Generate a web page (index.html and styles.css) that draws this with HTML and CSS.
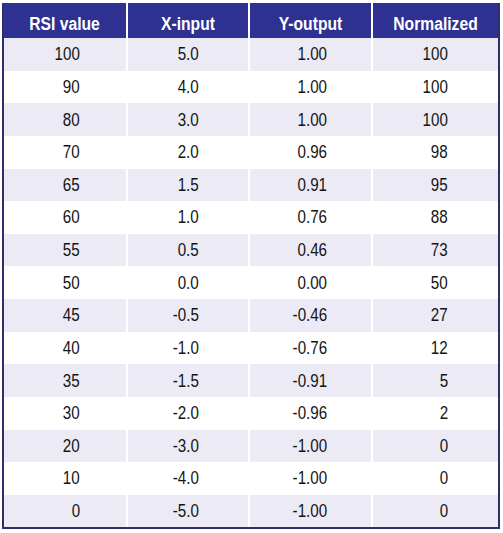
FILE: index.html
```html
<!DOCTYPE html>
<html>
<head>
<meta charset="utf-8">
<link rel="stylesheet" href="styles.css">
</head>
<body>
<div class="table">
  <div class="th"><span>RSI value</span></div><div class="th"><span>X-input</span></div><div class="th"><span>Y-output</span></div><div class="th"><span>Normalized</span></div>
  <div class="td c1 odd"><span>100</span></div><div class="td c2 odd"><span>5.0</span></div><div class="td c3 odd"><span>1.00</span></div><div class="td c4 odd"><span>100</span></div>
  <div class="td c1"><span>90</span></div><div class="td c2"><span>4.0</span></div><div class="td c3"><span>1.00</span></div><div class="td c4"><span>100</span></div>
  <div class="td c1 odd"><span>80</span></div><div class="td c2 odd"><span>3.0</span></div><div class="td c3 odd"><span>1.00</span></div><div class="td c4 odd"><span>100</span></div>
  <div class="td c1"><span>70</span></div><div class="td c2"><span>2.0</span></div><div class="td c3"><span>0.96</span></div><div class="td c4"><span>98</span></div>
  <div class="td c1 odd"><span>65</span></div><div class="td c2 odd"><span>1.5</span></div><div class="td c3 odd"><span>0.91</span></div><div class="td c4 odd"><span>95</span></div>
  <div class="td c1"><span>60</span></div><div class="td c2"><span>1.0</span></div><div class="td c3"><span>0.76</span></div><div class="td c4"><span>88</span></div>
  <div class="td c1 odd"><span>55</span></div><div class="td c2 odd"><span>0.5</span></div><div class="td c3 odd"><span>0.46</span></div><div class="td c4 odd"><span>73</span></div>
  <div class="td c1"><span>50</span></div><div class="td c2"><span>0.0</span></div><div class="td c3"><span>0.00</span></div><div class="td c4"><span>50</span></div>
  <div class="td c1 odd"><span>45</span></div><div class="td c2 odd"><span>-0.5</span></div><div class="td c3 odd"><span>-0.46</span></div><div class="td c4 odd"><span>27</span></div>
  <div class="td c1"><span>40</span></div><div class="td c2"><span>-1.0</span></div><div class="td c3"><span>-0.76</span></div><div class="td c4"><span>12</span></div>
  <div class="td c1 odd"><span>35</span></div><div class="td c2 odd"><span>-1.5</span></div><div class="td c3 odd"><span>-0.91</span></div><div class="td c4 odd"><span>5</span></div>
  <div class="td c1"><span>30</span></div><div class="td c2"><span>-2.0</span></div><div class="td c3"><span>-0.96</span></div><div class="td c4"><span>2</span></div>
  <div class="td c1 odd"><span>20</span></div><div class="td c2 odd"><span>-3.0</span></div><div class="td c3 odd"><span>-1.00</span></div><div class="td c4 odd"><span>0</span></div>
  <div class="td c1"><span>10</span></div><div class="td c2"><span>-4.0</span></div><div class="td c3"><span>-1.00</span></div><div class="td c4"><span>0</span></div>
  <div class="td c1 odd"><span>0</span></div><div class="td c2 odd"><span>-5.0</span></div><div class="td c3 odd"><span>-1.00</span></div><div class="td c4 odd"><span>0</span></div>
</div>
</body>
</html>
```
FILE: styles.css
```css
html, body {
  margin: 0;
  padding: 0;
  background: #ffffff;
}
body {
  padding: 3px 0 0 2px;
  font-family: "Liberation Sans", Arial, sans-serif;
  color: #141414;
}
.table {
  width: 494px;
  border-left: 2px solid #2f2d6e;
  border-right: 2px solid #2f2d6e;
  border-bottom: 2px solid #2f2d6e;
  background: #ffffff;
  display: grid;
  grid-template-columns: 122px 120px 121px 125px;
  grid-template-rows: 35px;
  grid-auto-rows: 32.64px;
  column-gap: 2px;
}
.th {
  background: #2e3191;
  color: #ffffff;
  font-weight: bold;
  font-size: 18px;
  display: flex;
  align-items: center;
  justify-content: center;
  padding-top: 8px;
}
.th span {
  display: inline-block;
  white-space: nowrap;
  transform: scaleX(0.87);
  transform-origin: center;
}
.td {
  font-size: 18.5px;
  display: flex;
  align-items: center;
  justify-content: flex-end;
  background: #ffffff;
}
.td span {
  display: inline-block;
  white-space: nowrap;
  transform: scaleX(0.82);
  transform-origin: right center;
}
.td.odd {
  background: #ebeaf5;
}
.c1 { padding-right: 46px; }
.c2 { padding-right: 49px; }
.c3 { padding-right: 44px; }
.c4 { padding-right: 50px; }
```
